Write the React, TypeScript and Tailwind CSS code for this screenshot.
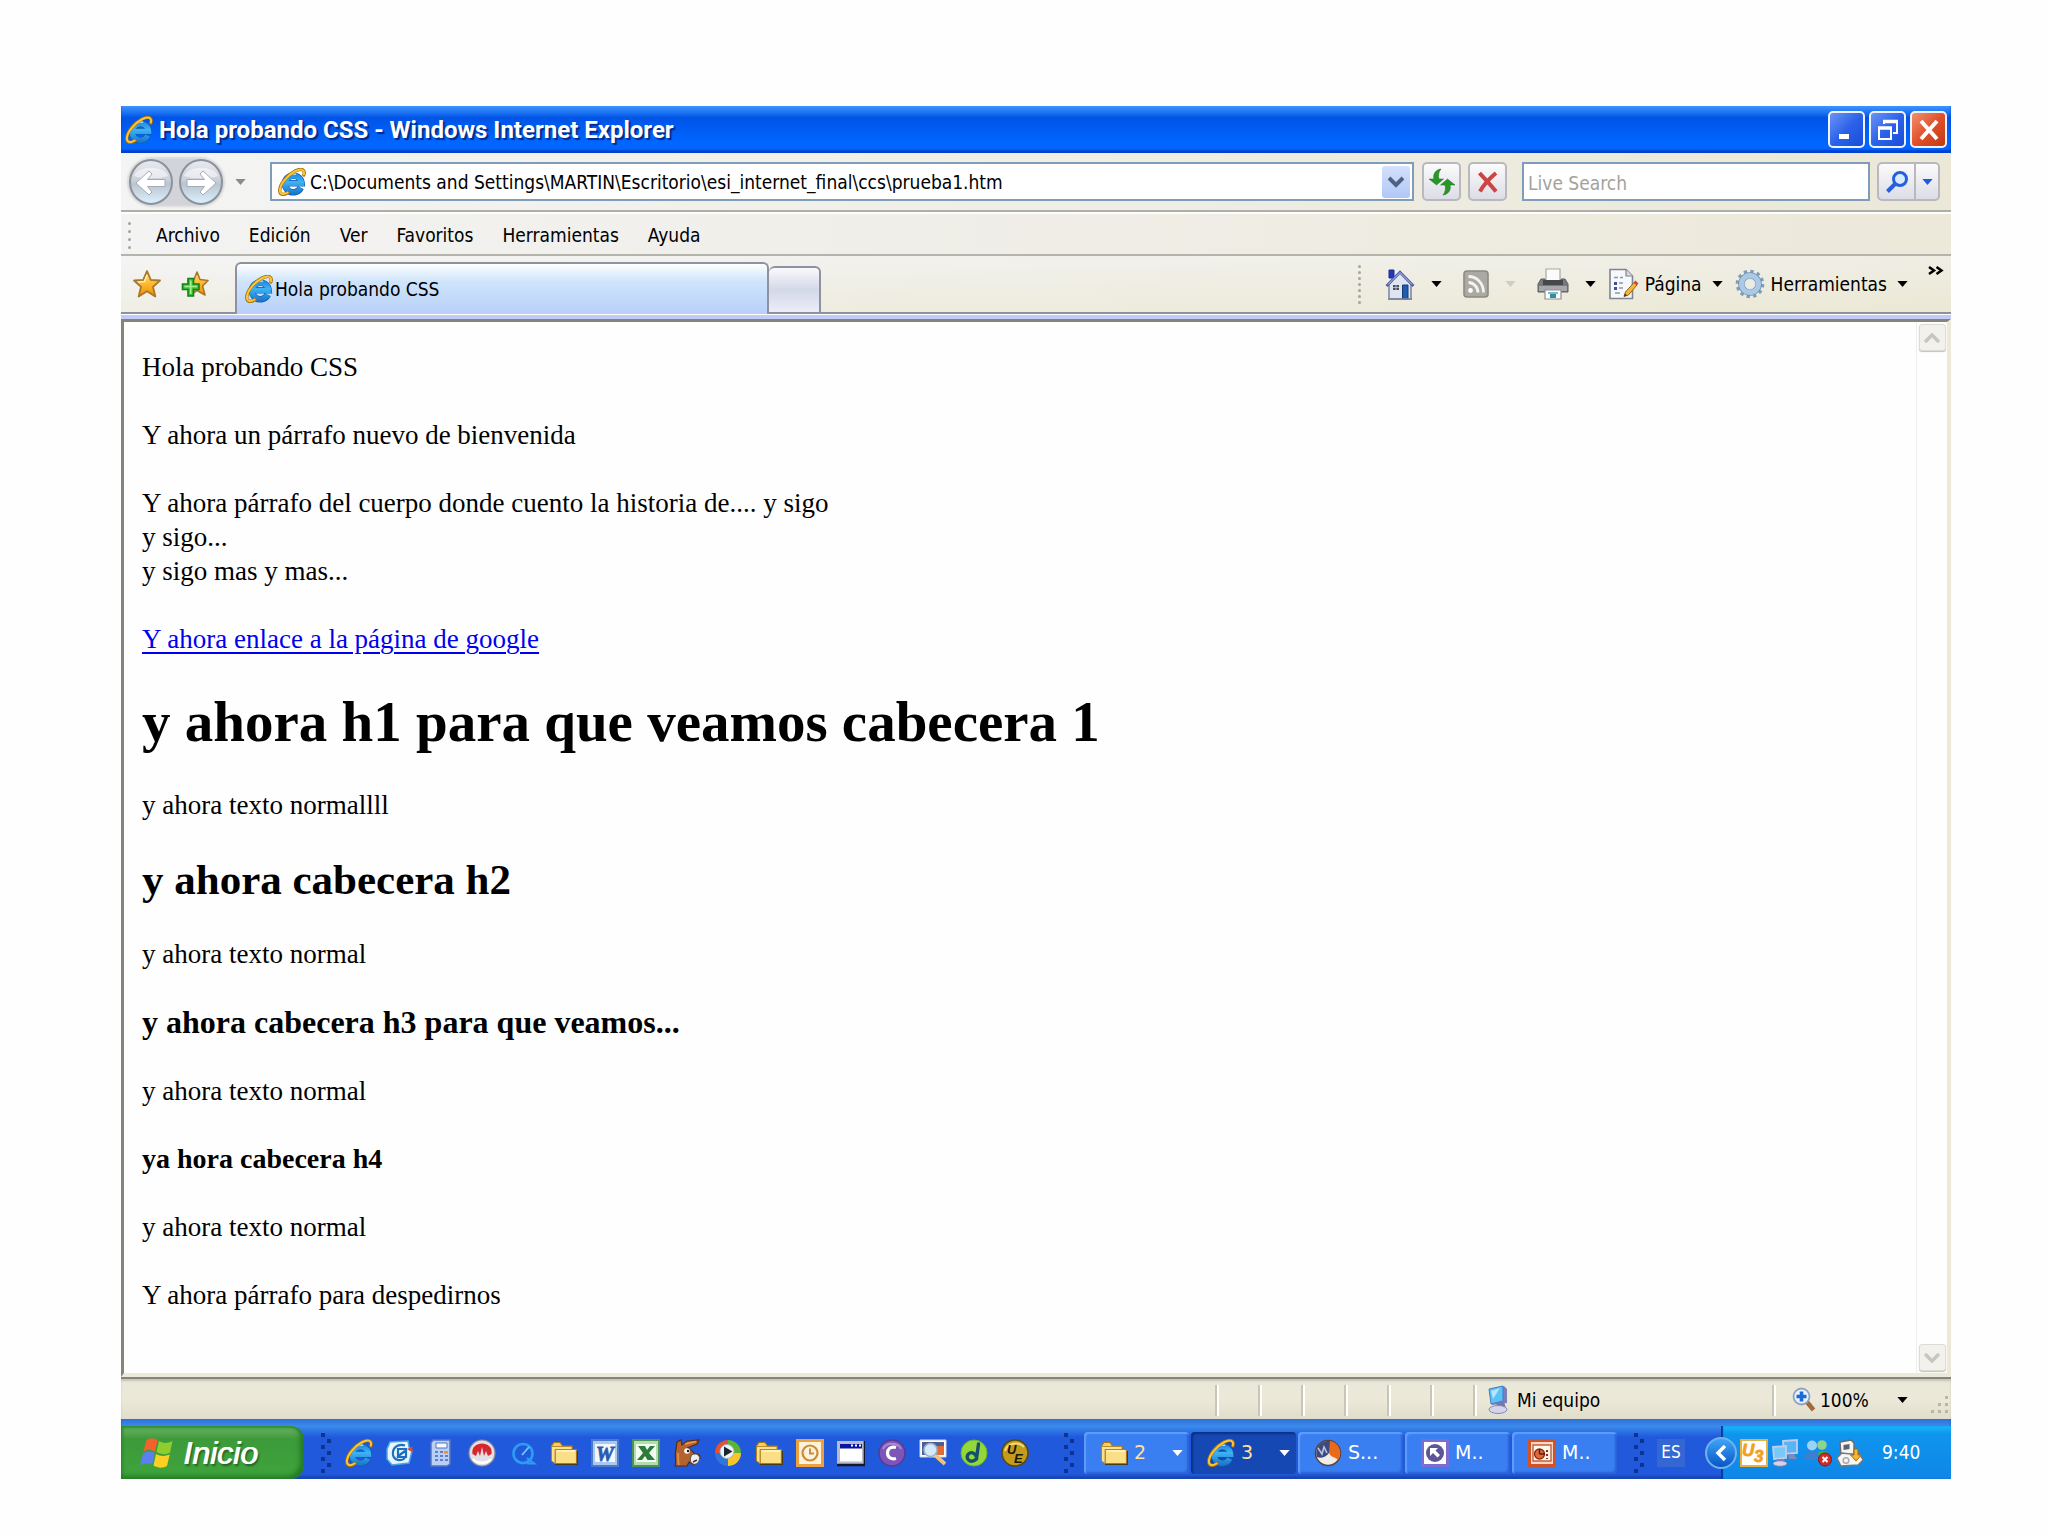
import type { ReactNode } from "react";

type IconProps = { className?: string };

const UI = "font-['DejaVu_Sans_Condensed','DejaVu_Sans',sans-serif]";

function IeLogo({ className = "size-7" }: IconProps) {
  return (
    <svg viewBox="0 0 32 32" className={className} fill="none" aria-hidden="true">
      <defs>
        <linearGradient id="ieBlue" gradientUnits="userSpaceOnUse" x1="0" y1="4" x2="0" y2="30">
          <stop offset="0" stopColor="#1a78d6" />
          <stop offset="0.45" stopColor="#3db4f6" />
          <stop offset="1" stopColor="#1874cc" />
        </linearGradient>
      </defs>
      <path d="M26 22.500A9.500 9.500 0 1 1 27 17.500H11" stroke="#125aa8" strokeWidth="7.500" />
      <path d="M26 22.500A9.500 9.500 0 1 1 27 17.500H11" stroke="url(#ieBlue)" strokeWidth="6" />
      <path d="M9 12C11 8 15 6.500 20 7" stroke="#8fdcff" strokeWidth="2" strokeLinecap="round" />
      <path d="M29.500 8C31.500 2 27 -0.500 19.500 3.500C10 8.500 1.500 19 2 26.500C2.500 31.500 7.500 31 11.500 28" stroke="#a96f08" strokeWidth="3.800" strokeLinecap="round" />
      <path d="M29.500 7.500C31 2 27 0 19.500 3.700C10.300 8.500 1.800 19 2.200 26.300C2.700 31 7.500 30.500 11 28" stroke="#fbc638" strokeWidth="2.300" strokeLinecap="round" />
    </svg>
  );
}

function Triangle({ className = "text-black" }: IconProps) {
  return (
    <svg viewBox="0 0 12 7" className={"h-[6px] w-[11px] shrink-0 " + className} fill="currentColor" aria-hidden="true">
      <path d="M0 0H12L6 7Z" />
    </svg>
  );
}

function NavArrow({ flip = false }: { flip?: boolean }) {
  return (
    <svg viewBox="0 0 44 46" className="h-[46px] w-[44px]" aria-hidden="true">
      <defs>
        <linearGradient id="navBall" x1="0" y1="0" x2="0" y2="1">
          <stop offset="0" stopColor="#e9ebf1" />
          <stop offset="0.45" stopColor="#cbd0da" />
          <stop offset="0.55" stopColor="#bcc4d0" />
          <stop offset="1" stopColor="#d9f4ff" />
        </linearGradient>
      </defs>
      <ellipse cx="22" cy="23" rx="21" ry="22" fill="url(#navBall)" stroke="#8d929a" strokeWidth="2" />
      <path d="M5 17C8 6 36 6 39 17C32 20 12 20 5 17Z" fill="#fff" opacity="0.5" />
      <path
        transform={flip ? "matrix(-1 0 0 1 44 0)" : undefined}
        d="M7 24L20 12L23 15L18.500 20.500H36V27.500H18.500L23 33L20 36Z"
        fill="#fff"
        stroke="#a4abb8"
        strokeWidth="1"
      />
    </svg>
  );
}

const STAR = "M14 1L17.800 9.800L27 10.500L20 16.800L22.300 26.500L14 21.300L5.700 26.500L8 16.800L1 10.500L10.200 9.800Z";

function StarDefs() {
  return (
    <linearGradient id="gold" x1="0" y1="0" x2="0" y2="1">
      <stop offset="0" stopColor="#ffe48a" />
      <stop offset="0.5" stopColor="#fdb92c" />
      <stop offset="1" stopColor="#ee8f0c" />
    </linearGradient>
  );
}

function StarIcon() {
  return (
    <svg viewBox="0 0 28 28" className="size-7" aria-hidden="true">
      <defs><StarDefs /></defs>
      <path d={STAR} fill="url(#gold)" stroke="#a9762a" strokeWidth="1.800" strokeLinejoin="round" />
      <path d="M14 5L11.500 11.500L5 12" fill="none" stroke="#fff0b8" strokeWidth="1.500" />
    </svg>
  );
}

function AddStarIcon() {
  return (
    <svg viewBox="0 0 28 28" className="size-7" aria-hidden="true">
      <defs><StarDefs /></defs>
      <path d="M16 2L19 9.500L27 10.500L21.500 16L24 25L16 20.500L9 25L11 16L7 10.500L13 9.500Z" fill="url(#gold)" stroke="#a9762a" strokeWidth="1.600" strokeLinejoin="round" />
      <path d="M7 8.500H12.500V14H18V19.500H12.500V26H7V19.500H1.500V14H7Z" fill="#3fc63a" stroke="#14801a" strokeWidth="1.600" />
      <path d="M9.700 10.500V24M3.500 16.500H16" stroke="#a5f08e" strokeWidth="1.600" />
    </svg>
  );
}

function HomeIcon() {
  return (
    <svg viewBox="0 0 30 32" className="h-8 w-[30px]" aria-hidden="true">
      <path d="M4 2H9V10H4Z" fill="#2438b8" stroke="#1a2a90" />
      <path d="M4 16L15 5L26 16V31H4Z" fill="#dfe4f1" stroke="#7b84a0" strokeWidth="1.500" />
      <path d="M1.500 18L15 4L28.500 18" fill="none" stroke="#4a5aa6" strokeWidth="2.600" />
      <path d="M3 16.500L15 4.500L27 16.500" fill="none" stroke="#c3ccec" strokeWidth="1" />
      <path d="M8 17H14V22H8Z" fill="#4a4f5e" />
      <path d="M11 17V22M8 19.500H14" stroke="#c8cede" strokeWidth="0.800" />
      <path d="M17.500 17H23V31H17.500Z" fill="#1f5cae" stroke="#123a78" />
      <path d="M3 31H27" stroke="#7b84a0" strokeWidth="1.600" />
    </svg>
  );
}

function FeedIcon() {
  return (
    <svg viewBox="0 0 26 28" className="h-7 w-[26px]" fill="none" aria-hidden="true">
      <rect x="1" y="1" width="24" height="26" rx="3" fill="#aaa9a3" stroke="#8b8a84" strokeWidth="1.600" />
      <circle cx="7.500" cy="20.500" r="2.400" fill="#fff" />
      <path d="M5.500 12.500C10.500 12.500 15 17 15 22.500M5.500 6.500C14 6.500 20.500 13.500 20.500 22.500" stroke="#f4f3ee" strokeWidth="2.800" />
    </svg>
  );
}

function PrinterIcon() {
  return (
    <svg viewBox="0 0 32 32" className="size-8" aria-hidden="true">
      <path d="M9 1H23V13H9Z" fill="#fbfbfb" stroke="#a8a8a8" strokeWidth="1.200" />
      <path d="M4 11H8V14H24V11H28L31 16V24H1V16Z" fill="#77797c" stroke="#5d5f62" strokeWidth="1" />
      <path d="M2 18H30V23H2Z" fill="#a6a8ab" />
      <path d="M6 12H26V17H6Z" fill="#46484b" />
      <path d="M8 22H24V31H8Z" fill="#fff" stroke="#909090" strokeWidth="1.200" />
      <path d="M11 24H21V26H11Z" fill="#7fb8d8" />
      <path d="M13 26H19V30H13Z" fill="#2f8f98" />
    </svg>
  );
}

function PageIcon() {
  return (
    <svg viewBox="0 0 31 32" className="h-8 w-[31px]" aria-hidden="true">
      <path d="M2 1.500H18L24.500 8V30.500H2Z" fill="#f7f8fb" stroke="#7f858f" strokeWidth="1.600" />
      <path d="M18 1.500V8H24.500" fill="#d6dae4" stroke="#7f858f" strokeWidth="1.200" />
      <path d="M6 9.500H10M12 9.500H15M11 15H15M11 20H15M7 25H12" stroke="#8f95a8" strokeWidth="1.600" />
      <path d="M6 14H9V17H6ZM6 19H9V22H6Z" fill="#3d4f9c" />
      <path d="M16 28.500L17.500 24L26 14.500L29 17L20.500 27Z" fill="#f2b63a" stroke="#8f611b" strokeWidth="1" />
      <path d="M25.500 14.500L27.500 12.500L30.500 15.500L28.700 17.500Z" fill="#d6453a" />
      <path d="M16 28.500L17 25.500L19 27.500Z" fill="#333" />
    </svg>
  );
}

function GearIcon() {
  return (
    <svg viewBox="0 0 30 32" className="h-8 w-[30px]" fill="none" aria-hidden="true">
      <circle cx="15" cy="16" r="12.500" stroke="#7f9db8" strokeWidth="3.600" strokeDasharray="3.270 3.270" />
      <circle cx="15" cy="16" r="8.500" stroke="#6f8fae" strokeWidth="6.600" />
      <circle cx="15" cy="16" r="8.500" stroke="#abc9e4" strokeWidth="5" />
      <circle cx="15" cy="16" r="5" stroke="#d4e6f4" strokeWidth="1" />
    </svg>
  );
}

function WindowsFlag() {
  return (
    <svg viewBox="0 0 34 32" className="h-8 w-[34px]" aria-hidden="true">
      <path d="M7 4C10 0.500 14 0.500 18.500 3L16 14.500C12 12 8 12 4.500 14.500Z" fill="#f2622a" />
      <path d="M20 4C24 6.500 28.500 6.500 33.500 4L31 15.500C26.500 18 22 17.500 17.500 15Z" fill="#8fce2f" />
      <path d="M4 16.500C8 13.500 12 14 15.700 16L13 28C9.500 25.500 5 25.500 1 28.500Z" fill="#5c7ff0" />
      <path d="M17 17C21.500 19.500 26 19.500 30.700 17.500L28 29C23.500 31.500 19 31 14.500 28.500Z" fill="#fbd023" />
    </svg>
  );
}

function DotGrip({ rows = 7 }: { rows?: number }) {
  return (
    <span className={rows > 4 ? "flex flex-col gap-[3px]" : "flex flex-col gap-[5px]"} aria-hidden="true">
      {Array.from({ length: rows }, (_, i) => (
        <i key={i} className="block size-[3px] rounded-full bg-[#a5a39c]" />
      ))}
    </span>
  );
}

function TaskGrip() {
  return (
    <span className="flex w-[10px] shrink-0 flex-col gap-[2px]" aria-hidden="true">
      {[0, 1, 2, 3, 4, 5, 6].map((i) => (
        <i key={i} className={i % 2 ? "block size-1 self-end bg-[#0d3394]" : "block size-1 bg-[#0d3394]"} />
      ))}
    </span>
  );
}

function Folder() {
  return (
    <svg viewBox="0 0 28 28" className="size-7" aria-hidden="true">
      <path d="M1.500 22V7L4 3.500H10L12.500 7H22V11" fill="#f6cf62" stroke="#a8781c" strokeWidth="1.200" />
      <path d="M5 10.500H26.500V24.500H5Z" fill="#fbdf86" stroke="#a8781c" strokeWidth="1.200" />
      <path d="M1.500 7.500V22L5 24.500V10.500H22V7.500Z" fill="#fbe08a" stroke="#a8781c" strokeWidth="0.800" />
      <path d="M6.500 12H25" stroke="#fff6cf" strokeWidth="1.500" />
      <path d="M5 25.500H27.500V12" fill="none" stroke="#4c3a12" strokeWidth="1.200" />
    </svg>
  );
}

function LetterTile({ letter, box, border, ink }: { letter: string; box: string; border: string; ink: string }) {
  return (
    <svg viewBox="0 0 28 28" className="size-7" aria-hidden="true">
      <rect x="1" y="1" width="26" height="26" fill={box} stroke={border} strokeWidth="2" />
      <rect x="4" y="5" width="20" height="18" fill="#fff" opacity="0.850" />
      <text x="14" y="21.500" textAnchor="middle" fontSize="20" fontWeight="700" fontStyle="italic" fontFamily="Liberation Serif, serif" fill={ink} stroke={ink} strokeWidth="0.800">{letter}</text>
    </svg>
  );
}

const quickLaunch: { name: string; icon: ReactNode }[] = [
  { name: "Internet Explorer", icon: <IeLogo /> },
  {
    name: "Outlook Express",
    icon: (
      <svg viewBox="0 0 28 28" className="size-7" aria-hidden="true">
        <path d="M4 3L22 2L23 8L26 12L23 24L6 26L1 20V10Z" fill="#e9f5fd" stroke="#4aa4e2" strokeWidth="1.500" />
        <path d="M19 6.500C12 4 6 9 7 16C8 21 15 23 19 19M19 12L11 18M12 10H20V18H12Z" fill="none" stroke="#1a6fc0" strokeWidth="2.200" />
        <path d="M21 10L26.500 7.500V13.500Z" fill="#e04a34" />
      </svg>
    ),
  },
  {
    name: "Calculadora",
    icon: (
      <svg viewBox="0 0 28 28" className="size-7" aria-hidden="true">
        <path d="M6 1H23V25L20 27H4V4Z" fill="#b9cff5" stroke="#5374c4" strokeWidth="1.500" />
        <path d="M9 4H20V9H9Z" fill="#f4f8ff" stroke="#5374c4" />
        <path d="M8 13H11M13 13H16M8 17H11M13 17H16M8 21H11M13 21H16M18 17H21M18 21H21" stroke="#5f7ecc" strokeWidth="2" />
        <path d="M17 12H21V14.500H17Z" fill="#f08a3c" />
      </svg>
    ),
  },
  {
    name: "Nero",
    icon: (
      <svg viewBox="0 0 28 28" className="size-7" aria-hidden="true">
        <circle cx="14" cy="14" r="13" fill="#e0e0e6" stroke="#8a8a98" strokeWidth="1.200" />
        <path d="M4.500 15C2 1 26 1 23.500 15L20 17L18 12L16 17L14 8L12 17L10 12L8 17Z" fill="#d8262c" />
        <path d="M5 20C9 25 19 25 23 20" stroke="#fff" strokeWidth="2.500" fill="none" />
      </svg>
    ),
  },
  {
    name: "QuickTime",
    icon: (
      <svg viewBox="0 0 28 28" className="size-7" fill="none" aria-hidden="true">
        <circle cx="14" cy="14.500" r="9.500" stroke="#2d9df2" strokeWidth="2.600" />
        <path d="M13 16L20 8" stroke="#6fc8ff" strokeWidth="1.800" />
        <path d="M18 19L25 24.500H18" stroke="#2d9df2" strokeWidth="2.200" />
      </svg>
    ),
  },
  { name: "Carpeta", icon: <Folder /> },
  { name: "Word", icon: <LetterTile letter="W" box="#a9c8f2" border="#4a7ac8" ink="#2a5bb0" /> },
  {
    name: "Excel",
    icon: (
      <svg viewBox="0 0 28 28" className="size-7" aria-hidden="true">
        <rect x="1" y="1" width="26" height="26" fill="#b5dcb0" stroke="#4a9350" strokeWidth="2" />
        <rect x="4" y="5" width="20" height="18" fill="#f4fbf3" />
        <path d="M6 7H13L15 11L18 7H23L17 14L23 21H15.500L13 17L10 21H5L11 14Z" fill="#2c7c3a" />
      </svg>
    ),
  },
  {
    name: "eMule",
    icon: (
      <svg viewBox="0 0 28 28" className="size-7" aria-hidden="true">
        <path d="M2 27C4 22 1 17 3 10L4 3L8 1L9 6L14 2L26 1L24 5L14 9C18 9 19 13 22 15C27 14 28 18 26 21L21 26L16 23L14 27Z" fill="#b5632c" stroke="#5c2a10" strokeWidth="1.200" />
        <path d="M5 14C6 19 4 22 6 26" fill="none" stroke="#d98c4c" strokeWidth="2" />
        <path d="M18.500 16C24 13 28 17 26 22C23 28 16 25 17.500 19Z" fill="#f0f0f0" stroke="#555" />
        <circle cx="14" cy="12" r="2.800" fill="#fff" />
        <circle cx="15" cy="12" r="1.200" fill="#111" />
        <path d="M12 5L23 2.500" stroke="#e79a58" strokeWidth="1.500" />
        <path d="M20 23L24 21" stroke="#333" strokeWidth="1.400" />
      </svg>
    ),
  },
  {
    name: "Reproductor de Windows Media",
    icon: (
      <svg viewBox="0 0 28 28" className="size-7" aria-hidden="true">
        <path d="M14 14L1 14A13 13 0 0 1 14 1Z" fill="#e8502e" />
        <path d="M14 14V1A13 13 0 0 1 27 14Z" fill="#5bb534" />
        <path d="M14 14H27A13 13 0 0 1 14 27Z" fill="#f6c62a" />
        <path d="M14 14V27A13 13 0 0 1 1 14Z" fill="#2f76d8" />
        <circle cx="13" cy="12.500" r="7" fill="#eef4fa" stroke="#9db4cc" />
        <path d="M10 7.500L18.500 12.500L10 17.500Z" fill="#1c2430" />
      </svg>
    ),
  },
  { name: "Mis documentos", icon: <Folder /> },
  {
    name: "Outlook",
    icon: (
      <svg viewBox="0 0 28 28" className="size-7" fill="none" aria-hidden="true">
        <rect x="1.500" y="1.500" width="25" height="25" fill="#fdf3dc" stroke="#eda13c" strokeWidth="3" />
        <circle cx="14" cy="14" r="7.500" stroke="#cf8a35" strokeWidth="2.200" />
        <path d="M14 9.500V14.500H18" stroke="#cf8a35" strokeWidth="2" />
      </svg>
    ),
  },
  {
    name: "Mostrar escritorio",
    icon: (
      <svg viewBox="0 0 28 28" className="size-7" aria-hidden="true">
        <path d="M0 2H28V26H0Z" fill="#b8bcc8" />
        <path d="M28 2V26H0" fill="none" stroke="#15182a" strokeWidth="2.600" />
        <path d="M3 5H25V22.500H3Z" fill="#fff" />
        <path d="M3 5H25V9.500H3Z" fill="#0a14a0" />
        <path d="M14 6.500H16M18 6.500H20M22 6.500H24" stroke="#fff" strokeWidth="2" />
      </svg>
    ),
  },
  {
    name: "Creative",
    icon: (
      <svg viewBox="0 0 28 28" className="size-7" fill="none" aria-hidden="true">
        <circle cx="14" cy="14" r="13" fill="#7d55b8" stroke="#573a92" strokeWidth="1.500" />
        <path d="M5 10C8 3 20 3 23 10" stroke="#a98ad6" strokeWidth="2" />
        <path d="M18 8.500C12 7 9.500 10.500 9.500 14C9.500 18 13 21 18 19.500" stroke="#fff" strokeWidth="3.200" />
      </svg>
    ),
  },
  {
    name: "Buscar imagen",
    icon: (
      <svg viewBox="0 0 28 28" className="size-7" aria-hidden="true">
        <path d="M1 1H27V18H1Z" fill="#fff" stroke="#d0d4e0" />
        <path d="M3 3H25V16H3Z" fill="#4a5f94" />
        <path d="M18 7H25V16H18Z" fill="#e46a34" />
        <circle cx="11.500" cy="11" r="6.500" fill="#d6e8fb" stroke="#9db4d0" strokeWidth="1.600" />
        <path d="M16.500 16.500L26 25" stroke="#f1c274" strokeWidth="3.800" />
      </svg>
    ),
  },
  {
    name: "Dreamweaver",
    icon: (
      <svg viewBox="0 0 28 28" className="size-7" fill="none" aria-hidden="true">
        <circle cx="14" cy="14" r="13" fill="#93d838" stroke="#6cb42a" />
        <path d="M18.500 5L16.500 20C11 25 5 20 8 15.500C10.500 12 15 14 16 17" stroke="#15506a" strokeWidth="3.400" strokeLinecap="round" />
      </svg>
    ),
  },
  {
    name: "UltraEdit",
    icon: (
      <svg viewBox="0 0 28 28" className="size-7" aria-hidden="true">
        <circle cx="14" cy="14" r="13" fill="#c39c1e" stroke="#5b4708" strokeWidth="1.500" />
        <path d="M4 12C6 4 18 2 23 8" fill="none" stroke="#f2dc76" strokeWidth="2" />
        <text x="6" y="15" fontSize="13" fontWeight="700" fontStyle="italic" fontFamily="Liberation Sans, sans-serif" fill="#1b1503">U</text>
        <text x="13" y="24" fontSize="13" fontWeight="700" fontStyle="italic" fontFamily="Liberation Sans, sans-serif" fill="#1b1503">E</text>
      </svg>
    ),
  },
];

function TitleButton({ label, red = false, children }: { label: string; red?: boolean; children: ReactNode }) {
  return (
    <button
      type="button"
      aria-label={label}
      className={
        "flex size-[37px] items-center justify-center rounded-[5px] border-2 border-[#eef3ff] bg-linear-to-br " +
        (red ? "from-[#f0906c] via-[#e0502a] to-[#c23a10]" : "from-[#6c93f4] via-[#2c62ea] to-[#1a4cd8]")
      }
    >
      <svg viewBox="0 0 24 24" className="size-6" fill="none" stroke="#fff" aria-hidden="true">{children}</svg>
    </button>
  );
}

function TaskButton({ active = false, count = false, icon, text }: { active?: boolean; count?: boolean; icon: ReactNode; text: string }) {
  return (
    <button
      type="button"
      className={
        "flex h-[42px] w-[105px] items-center gap-[6px] rounded-[4px] pr-[6px] pl-4 " +
        (active
          ? "bg-[#1648b4] shadow-[inset_2px_2px_2px_#0c3088]"
          : "bg-[#3a7ff2] shadow-[inset_2px_2px_1px_#5f9dfa,inset_-2px_-2px_2px_#2a62d4]")
      }
    >
      {icon}
      <span className={count ? "font-['DejaVu_Sans',sans-serif] text-[19px] text-[#ffe0a0]" : "font-['DejaVu_Sans',sans-serif] text-[19px] text-white"}>{text}</span>
      {count && <Triangle className="ml-auto text-white" />}
    </button>
  );
}

function ScrollButton({ label, d }: { label: string; d: string }) {
  return (
    <button type="button" aria-label={label} className="flex size-[27px] items-center justify-center rounded-[3px] border border-[#dddcd2] bg-[#f2f1ec] shadow-[0_1px_1px_#c4c3ba]">
      <svg viewBox="0 0 16 10" className="h-[10px] w-4" fill="none" stroke="#c6c5bf" strokeWidth="3.500" aria-hidden="true"><path d={d} /></svg>
    </button>
  );
}

function TabBarTool({ label, icon, text, muted = false }: { label: string; icon: ReactNode; text?: string; muted?: boolean }) {
  return (
    <button type="button" className="flex items-center" aria-label={label}>
      {icon}
      {text && <span className="ml-[6px]">{text}</span>}
      <Triangle className={muted ? "ml-4 text-[#cfccc0]" : text ? "ml-[10px] text-black" : "ml-4 text-black"} />
    </button>
  );
}

function TitleBar() {
  return (
    <header className="flex h-[47px] items-center justify-between bg-linear-to-b from-[#3d95ff] via-[#0054e6] via-25% to-[#0066ff] to-75% pr-1 pl-1 shadow-[inset_0_-3px_2px_#0040cc]">
      <div className="flex items-center gap-[6px]">
        <IeLogo />
        <h1 className="font-['Roboto',sans-serif] text-[24px] font-bold whitespace-nowrap text-white [text-shadow:2px_2px_1px_#062a8c]">
          Hola probando CSS - Windows Internet Explorer
        </h1>
      </div>
      <div className="flex gap-[4px]">
        <TitleButton label="Minimizar"><path d="M4 18.500H14" strokeWidth="5" /></TitleButton>
        <TitleButton label="Restaurar"><path d="M3 10H15V21H3ZM8 6V3H21V15H17" strokeWidth="2" /><path d="M2 10H16M7 3.500H22" strokeWidth="3.500" /></TitleButton>
        <TitleButton label="Cerrar" red><path d="M4 3L20 21M20 3L4 21" strokeWidth="4" /></TitleButton>
      </div>
    </header>
  );
}

function SquareButton({ label, children }: { label: string; children: ReactNode }) {
  return (
    <button type="button" aria-label={label} className="flex size-[39px] items-center justify-center rounded-[5px] border-2 border-[#b9b8bd] bg-linear-to-b from-[#fbfbfc] to-[#dcdde6]">
      {children}
    </button>
  );
}

const CURVED_ARROW = "M6 11C4.500 6 8 1.500 13 1C10.500 4 10 7.500 11 11H15.500L8.500 17L1 11Z";

function AddressRow() {
  return (
    <div className="flex h-[59px] items-center border-b-2 border-[#aeb0a8] bg-linear-to-r from-[#f4f4f4] to-[#ebe8d8] pr-[11px] pl-2">
      <div className="flex items-center gap-[6px] rounded-full bg-[#d3d4d9] shadow-[0_0_2px_2px_#d9d9db]">
        <button type="button" aria-label="Atrás"><NavArrow /></button>
        <button type="button" aria-label="Adelante"><NavArrow flip /></button>
      </div>
      <button type="button" aria-label="Páginas recientes" className="mx-3"><Triangle className="text-[#8b8b8b]" /></button>
      <div className="ml-3 flex h-[39px] min-w-0 flex-1 items-center border-2 border-[#7f9db9] bg-white pr-[2px] pl-[6px]">
        <IeLogo />
        <input
          aria-label="Dirección"
          defaultValue="C:\Documents and Settings\MARTIN\Escritorio\esi_internet_final\ccs\prueba1.htm"
          className="ml-1 min-w-0 flex-1 bg-transparent pt-[2px] outline-none"
        />
        <button type="button" aria-label="Mostrar direcciones" className="flex h-8 w-7 items-center justify-center rounded-[3px] bg-linear-to-b from-[#d5e0fb] to-[#b0c8f6]">
          <svg viewBox="0 0 16 12" className="h-3 w-4" fill="none" stroke="#4d6185" strokeWidth="4" aria-hidden="true"><path d="M1 2L8 9L15 2" /></svg>
        </button>
      </div>
      <div className="mr-[15px] ml-[8px] flex gap-[7px]">
        <SquareButton label="Actualizar">
          <svg viewBox="0 0 28 28" className="size-7" fill="#2a9628" stroke="#1c701c" strokeWidth="0.500" aria-hidden="true">
            <path d={CURVED_ARROW} />
            <path d={CURVED_ARROW} transform="rotate(180 14 14)" />
          </svg>
        </SquareButton>
        <SquareButton label="Detener">
          <svg viewBox="0 0 24 24" className="size-6" fill="none" stroke="#cc4545" strokeWidth="4" aria-hidden="true">
            <path d="M3.500 3C8 8 14 14 20 21.500M20 3C14 8 8 14 4 21.500" />
          </svg>
        </SquareButton>
      </div>
      <input type="search" aria-label="Buscar" placeholder="Live Search" className="h-[39px] w-[17%] max-w-[348px] min-w-[120px] grow border-2 border-[#7f9db9] bg-white px-1 pt-[2px] placeholder:text-[#a3a29b] placeholder:opacity-100" />
      <div className="ml-[7px] flex h-[39px] w-[63px] rounded-[5px] border-2 border-[#b9b8bd] bg-linear-to-b from-[#fbfbfc] to-[#dcdde6]">
        <button type="button" aria-label="Buscar en la web" className="flex flex-1 items-center justify-center border-r-2 border-[#b9b8bd]">
          <svg viewBox="0 0 24 24" className="size-6" fill="none" stroke="#2460e0" aria-hidden="true">
            <circle cx="15" cy="9" r="6.500" strokeWidth="3" fill="#d9ecff" />
            <path d="M10 14L2.500 21.500" strokeWidth="4" />
          </svg>
        </button>
        <button type="button" aria-label="Opciones de búsqueda" className="flex w-[22px] items-center justify-center"><Triangle className="text-[#1d5ce0]" /></button>
      </div>
    </div>
  );
}

function MenuRow() {
  return (
    <nav className="flex h-11 items-center gap-[29px] border-t-2 border-b-2 border-t-white border-b-[#b5b4aa] bg-linear-to-r from-[#f3f3f3] to-[#ece8da] pt-[2px] pl-[7px]">
      <span className="-mr-1"><DotGrip rows={4} /></span>
      {["Archivo", "Edición", "Ver", "Favoritos", "Herramientas", "Ayuda"].map((m) => (
        <button key={m} type="button">{m}</button>
      ))}
    </nav>
  );
}

function TabRow() {
  return (
    <div>
      <div className="flex h-[58px] items-stretch bg-linear-to-br from-[#f4f4f4] to-[#ebe8d4]">
        <div className="flex w-[114px] items-center gap-5 border-b-2 border-[#8e92a0] pl-3">
          <button type="button" aria-label="Centro de favoritos"><StarIcon /></button>
          <button type="button" aria-label="Agregar a favoritos"><AddStarIcon /></button>
        </div>
        <button type="button" className="mt-[6px] flex w-[534px] min-w-[200px] items-center gap-[2px] rounded-t-[6px] border-2 border-b-0 border-[#8e92a0] bg-linear-to-b from-white via-[#cfe4fb] via-35% to-[#b8d0f9] pl-2">
          <IeLogo />
          <span>Hola probando CSS</span>
        </button>
        <button type="button" aria-label="Nueva pestaña" className="mt-[10px] w-[52px] rounded-t-[6px] border-2 border-l-0 border-[#8e92a0] bg-linear-to-b from-[#fafafc] via-[#d3d8e8] via-50% to-[#ecedf8]" />
        <div className="flex flex-1 items-center justify-end border-b-2 border-[#8e92a0] pr-[7px]">
          <DotGrip />
          <div className="mr-3 ml-6 flex gap-[21px]">
            <TabBarTool label="Página principal" icon={<HomeIcon />} />
            <TabBarTool label="Fuentes" icon={<FeedIcon />} muted />
            <TabBarTool label="Imprimir" icon={<PrinterIcon />} />
          </div>
          <div className="mr-5 flex gap-3">
            <TabBarTool label="Página" icon={<PageIcon />} text="Página" />
            <TabBarTool label="Herramientas" icon={<GearIcon />} text="Herramientas" />
          </div>
          <button type="button" aria-label="Más herramientas" className="mt-[10px] self-start">
            <svg viewBox="0 0 16 9" className="h-[9px] w-4" fill="none" stroke="#000" strokeWidth="2.500" aria-hidden="true"><path d="M1 1L6 4.500L1 8M8.500 1L13.500 4.500L8.500 8" /></svg>
          </button>
        </div>
      </div>
      <div className="h-[5px] border-t border-white bg-[#c0ccf6]" />
    </div>
  );
}

function Document() {
  return (
    <main className="flex-1 pt-[28px] pb-8 pl-[18px] font-['Liberation_Serif',serif] text-[27px] leading-[34px] text-black [&>*+*]:mt-[34px]">
      <p>Hola probando CSS</p>
      <p>Y ahora un párrafo nuevo de bienvenida</p>
      <p>
        Y ahora párrafo del cuerpo donde cuento la historia de.... y sigo
        <br />
        y sigo...
        <br />
        y sigo mas y mas...
      </p>
      <p><a href="#google" className="text-[#0000ee] underline decoration-2 underline-offset-4">Y ahora enlace a la página de google</a></p>
      <h1 className="text-[57px] leading-[64px] font-bold">y ahora h1 para que veamos cabecera 1</h1>
      <p>y ahora texto normallll</p>
      <h2 className="text-[43px] leading-[47px] font-bold">y ahora cabecera h2</h2>
      <p>y ahora texto normal</p>
      <h3 className="text-[32px] leading-[35px] font-bold">y ahora cabecera h3 para que veamos...</h3>
      <p>y ahora texto normal</p>
      <h4 className="text-[28px] font-bold">ya hora cabecera h4</h4>
      <p>y ahora texto normal</p>
      <p>Y ahora párrafo para despedirnos</p>
    </main>
  );
}

function StatusBar() {
  return (
    <footer className="flex h-[42px] items-center border-t-2 border-[#85847c] bg-linear-to-b from-[#e9e7d8] via-[#ece9da] to-[#e0ddca] pt-[2px] shadow-[inset_0_2px_2px_#c6c4b6]">
      <div className="flex-1" />
      <div className="flex">
        {[0, 1, 2, 3, 4, 5].map((i) => (
          <div key={i} className="h-[31px] w-[43px] border-l-2 border-[#c9c6b4] shadow-[inset_2px_0_0_#fff]" />
        ))}
      </div>
      <div className="flex h-[31px] w-[299px] items-center gap-2 border-l-2 border-[#c9c6b4] pl-3 shadow-[inset_2px_0_0_#fff]">
        <svg viewBox="0 0 22 30" className="h-[30px] w-[22px]" aria-hidden="true">
          <path d="M3 4L17 1L20 4V18L5 20Z" fill="#7c7fb6" />
          <path d="M2 4L16 1V16L4 19Z" fill="#5cc1f6" stroke="#3f7fc4" />
          <path d="M4 6L13 3L6 14Z" fill="#b4e6ff" />
          <path d="M10 18L17 17L19 23H9Z" fill="#7577ac" />
          <ellipse cx="11" cy="24.500" rx="9" ry="4" fill="#d4d4ec" stroke="#8688b8" />
        </svg>
        <span>Mi equipo</span>
      </div>
      <div className="flex h-[31px] w-[179px] items-center border-l-2 border-[#c9c6b4] pl-[18px] shadow-[inset_2px_0_0_#fff]">
        <svg viewBox="0 0 24 26" className="h-[26px] w-6" aria-hidden="true">
          <path d="M15 15L21.500 23" stroke="#a06a3a" strokeWidth="4.500" />
          <circle cx="9.500" cy="9.500" r="8" fill="#e6f2fd" stroke="#8ea3c0" strokeWidth="1.800" />
          <path d="M9.500 4.500V14.500M4.500 9.500H14.500" stroke="#1f6ad2" strokeWidth="3.600" />
        </svg>
        <button type="button" className="ml-1 flex items-center gap-7">100% <Triangle /></button>
        <svg viewBox="0 0 20 20" className="mt-3 ml-auto size-5" fill="#b9b6a4" aria-hidden="true">
          <path d="M14 0H17V3H14ZM14 7H17V10H14ZM14 14H17V17H14ZM7 7H10V10H7ZM7 14H10V17H7ZM0 14H3V17H0Z" />
        </svg>
      </div>
    </footer>
  );
}

function Tray() {
  return (
    <div className="relative flex h-[53px] w-[230px] items-center bg-linear-to-b from-[#19b9f8] via-[#0f95ee] via-15% to-[#0f86e6] pl-[19px] shadow-[inset_2px_0_1px_#0a3a9a]">
      <button type="button" aria-label="Mostrar iconos ocultos" className="absolute -left-4 flex size-8 items-center justify-center rounded-full border-2 border-[#6fb4ee] bg-linear-to-b from-[#3fa4f6] to-[#0a55c8]">
        <svg viewBox="0 0 12 16" className="h-4 w-3" fill="none" stroke="#fff" strokeWidth="3.500" aria-hidden="true"><path d="M10 1L3 8L10 15" /></svg>
      </button>
      <div className="flex items-center gap-1">
        <svg viewBox="0 0 28 28" className="size-7" aria-hidden="true">
          <rect x="1" y="1" width="26" height="26" fill="#fff" stroke="#e8b040" strokeWidth="2" />
          <text x="2" y="17" fontSize="17" fontWeight="700" fontStyle="italic" fontFamily="Liberation Sans, sans-serif" fill="#f0a01c" stroke="#f0a01c" strokeWidth="0.800">U</text>
          <text x="14" y="23" fontSize="17" fontWeight="700" fontStyle="italic" fontFamily="Liberation Sans, sans-serif" fill="#f0a01c" stroke="#f0a01c" strokeWidth="0.800">3</text>
        </svg>
        <svg viewBox="0 0 28 28" className="size-7" aria-hidden="true">
          <path d="M11 2L25 1V14L12 15Z" fill="#58b4f4" stroke="#c2cde8" strokeWidth="1.800" />
          <path d="M16 15H22L25 20H17Z" fill="#8488b8" />
          <path d="M1 8L14 7V19L2 20Z" fill="#7ac8f8" stroke="#c2cde8" strokeWidth="1.800" />
          <path d="M5 20H12L13 23H4Z" fill="#8488b8" />
          <ellipse cx="8" cy="24.500" rx="7" ry="2.800" fill="#d2d4ea" stroke="#777bb0" />
        </svg>
        <svg viewBox="0 0 28 28" className="size-7" aria-hidden="true">
          <circle cx="18" cy="6" r="4.800" fill="#8fd48a" />
          <path d="M11 21C11 9 26 9 26 21Z" fill="#3fae46" />
          <circle cx="8" cy="6.500" r="5" fill="#9cd2f6" />
          <path d="M0 21C0 9 16 9 16 21Z" fill="#3b7fd0" />
          <circle cx="21" cy="20.500" r="6.500" fill="#d42a2a" stroke="#8c1414" />
          <path d="M18.500 18L23.500 23M23.500 18L18.500 23" stroke="#fff" strokeWidth="2" />
        </svg>
        <svg viewBox="0 0 28 28" className="size-7" aria-hidden="true">
          <path d="M4 3L15 1L18 4V15L5 16Z" fill="#f4f4f6" stroke="#6a6a6a" strokeWidth="1.400" />
          <path d="M7.500 6L13.500 5V10L7.500 11Z" fill="#59646e" />
          <path d="M1 19L6 14L24 16L27 21L22 26L5 27Z" fill="#f6f6f6" stroke="#777" strokeWidth="1.300" />
          <circle cx="10" cy="21.500" r="2.800" fill="none" stroke="#aaa" strokeWidth="1.500" />
          <path d="M18 10H22V16H25.500L20 22L14.500 16H18Z" fill="#f8b52c" stroke="#a06a10" />
        </svg>
      </div>
      <time className="ml-[18px] font-['DejaVu_Sans_Condensed','DejaVu_Sans',sans-serif] text-[19px] text-white">9:40</time>
    </div>
  );
}

function TaskBar() {
  return (
    <div className="flex h-[60px] items-end bg-linear-to-b from-[#2f6fd8] via-[#3c8aec] via-12% to-[#2159dc] to-30% shadow-[inset_0_-3px_2px_#1a46b4]">
      <button type="button" className="flex h-[53px] w-[183px] shrink-0 items-center gap-[10px] rounded-r-[14px] bg-linear-to-b from-[#6cb566] via-[#3c9a3a] via-25% to-[#3fa43c] pl-[18px] shadow-[inset_-4px_-3px_5px_#237a24,inset_2px_2px_3px_#2f8a30]">
        <WindowsFlag />
        <span className="font-['Liberation_Sans',sans-serif] text-[32px] text-white italic [text-shadow:1px_0_0_#fff,2px_2px_2px_#1f5c20]">Inicio</span>
      </button>
      <div className="flex h-[53px] flex-1 items-center">
        <span className="ml-[17px]"><TaskGrip /></span>
        <div className="ml-[14px] flex gap-[13px]">
          {quickLaunch.map((q) => (
            <button key={q.name} type="button" aria-label={q.name}>{q.icon}</button>
          ))}
        </div>
        <span className="mr-[10px] ml-auto"><TaskGrip /></span>
        <div className="flex gap-[2px]">
          <TaskButton count icon={<Folder />} text="2" />
          <TaskButton count active icon={<IeLogo />} text="3" />
          <TaskButton
            text="S..."
            icon={
              <svg viewBox="0 0 28 28" className="size-7" aria-hidden="true">
                <circle cx="14" cy="14" r="12.500" fill="#f0ede8" stroke="#54423c" strokeWidth="1.500" />
                <path d="M14 2A12 12 0 0 1 24 21C21 17 15 19 15 12Z" fill="#ea6a1c" />
                <path d="M13 2A12 12 0 0 0 3 18C7 20 12 18 15 14L16 2Z" fill="#3c4a80" />
                <path d="M4 9L8 15L10 8L13 14" fill="none" stroke="#b9c3de" strokeWidth="1.600" />
              </svg>
            }
          />
          <TaskButton
            text="M.."
            icon={
              <svg viewBox="0 0 28 28" className="size-7" aria-hidden="true">
                <rect x="1.500" y="1.500" width="25" height="25" fill="#fff" stroke="#7c6ed0" strokeWidth="3" />
                <circle cx="14" cy="14" r="9" fill="#5c559a" />
                <path d="M9 9H17L14.500 11.500L19 16L16.500 18.500L12 14L9 17Z" fill="#fff" />
              </svg>
            }
          />
          <TaskButton
            text="M.."
            icon={
              <svg viewBox="0 0 28 28" className="size-7" aria-hidden="true">
                <rect x="1.500" y="1.500" width="25" height="25" fill="#f8d8c4" stroke="#d0532a" strokeWidth="3" />
                <path d="M5 6H23V22H5Z" fill="#fff6ee" stroke="#c4603a" strokeWidth="1.400" />
                <circle cx="11.500" cy="15" r="5" fill="#e26a3a" stroke="#8a2e12" strokeWidth="1.400" />
                <path d="M11.500 15V10M11.500 15H16.500" stroke="#5a1c0a" strokeWidth="1.500" />
                <path d="M19 11V13M19 15V17M19 19V20" stroke="#8a2e12" strokeWidth="2" />
              </svg>
            }
          />
        </div>
        <span className="ml-[17px]"><TaskGrip /></span>
        <button type="button" className="mr-9 ml-[13px] h-7 w-7 bg-[#3467d4] text-[17px] text-white">ES</button>
      </div>
      <Tray />
    </div>
  );
}

export default function App() {
  return (
    <div className={"flex min-h-screen flex-col bg-[#fefefe] pt-[106px] pr-[97px] pb-[57px] pl-[121px] text-[19px] text-black " + UI}>
      <TitleBar />
      <AddressRow />
      <MenuRow />
      <TabRow />
      <div className="flex flex-1 border-t-[3px] border-r-4 border-b-4 border-l-[3px] border-t-[#85847c] border-r-[#ece9d8] border-b-[#ece9d8] border-l-[#85847c] bg-[#fefefe]">
        <Document />
        <div className="flex w-[31px] flex-col items-center justify-between border-l border-[#eeeeea] py-[2px]">
          <ScrollButton label="Desplazar hacia arriba" d="M1 9L8 2L15 9" />
          <ScrollButton label="Desplazar hacia abajo" d="M1 1L8 8L15 1" />
        </div>
      </div>
      <StatusBar />
      <TaskBar />
    </div>
  );
}
